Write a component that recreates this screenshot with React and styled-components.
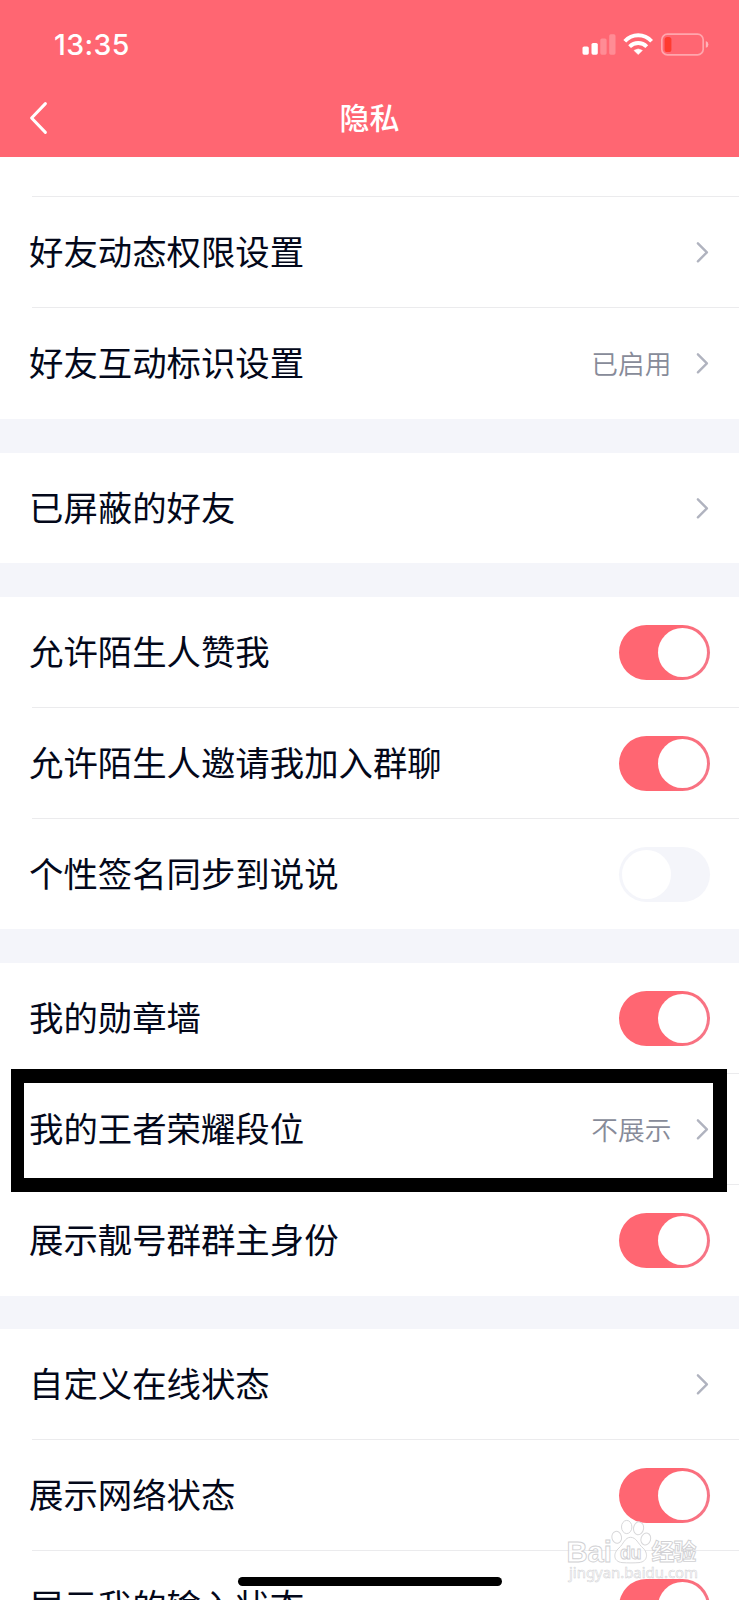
import React from 'react';
import styled, { createGlobalStyle } from 'styled-components';

const GlobalStyle = createGlobalStyle`
  * { box-sizing: border-box; }
  html, body { margin: 0; padding: 0; background: #fff; }
  body { overflow: hidden; font-family: "Noto Sans CJK SC", "Liberation Sans", sans-serif; }
`;

const Screen = styled.main`
  position: relative;
  width: 739px;
  height: 1600px;
  overflow: hidden;
  background: #f4f5fa;
  color: #03081a;
`;

const Header = styled.header`
  height: 157px;
  background: #ff6672;
  color: #fff;
`;

const StatusBar = styled.div`
  display: flex;
  justify-content: space-between;
  align-items: center;
  height: 90px;
  padding: 0 30px 0 54px;
`;

const Clock = styled.span`
  font: 550 28.5px/34px Inter, sans-serif;
  letter-spacing: 0.4px;
`;

const NavBar = styled.div`
  display: grid;
  grid-template-columns: 100px 1fr 100px;
  align-items: center;
  height: 55px;
`;

const BackButton = styled.button`
  display: flex;
  border: 0;
  padding: 0 0 0 29px;
  background: none;
  color: inherit;
`;

const Title = styled.h1`
  margin: 0;
  padding-bottom: 3px;
  text-align: center;
  font-size: 30px;
  line-height: 44px;
  font-weight: 500;
`;

const Group = styled.section`
  padding-top: ${(p) => p.$lead || 0}px;
  padding-bottom: ${(p) => p.$tail || 0}px;
  margin-bottom: ${(p) => p.$gap ?? 34}px;
  background: #fff;
`;

const RowBox = styled.div`
  position: relative;
  display: flex;
  align-items: center;
  height: ${(p) => (p.$divided ? 111 : 110)}px;
  padding: ${(p) => (p.$divided ? 1 : 0)}px 28.6px 0 29px;
  background: ${(p) =>
    p.$divided ? 'linear-gradient(#ebebed, #ebebed) 32px 0 / 100% 1px no-repeat' : 'none'};
`;

const Label = styled.span`
  flex: 1;
  padding-bottom: 4px;
  font-size: 34.4px;
  line-height: 50px;
  font-weight: 400;
  white-space: nowrap;
`;

const Value = styled.span`
  margin-right: 25px;
  padding-bottom: 1px;
  color: #878b99;
  font-size: 26.7px;
  line-height: 40px;
  font-weight: 350;
`;

const Switch = styled.span`
  display: flex;
  justify-content: ${(p) => (p.$on ? 'flex-end' : 'flex-start')};
  width: 91px;
  height: 55px;
  padding: 3px;
  border-radius: 28px;
  background: ${(p) => (p.$on ? 'linear-gradient(100deg, #ff6672 55%, #f5788a 100%)' : '#f4f5fa')};
`;

const Knob = styled.span`
  width: 49px;
  height: 49px;
  border-radius: 50%;
  background: #fff;
`;

const Highlight = styled.div`
  position: absolute;
  z-index: 1;
  top: -4px;
  left: 11px;
  width: 716px;
  height: 123px;
  border: solid #000;
  border-width: 14px 14px 14px 13px;
`;

const HomeIndicator = styled.div`
  position: absolute;
  left: 237.5px;
  top: 1577px;
  width: 264px;
  height: 9px;
  border-radius: 5px;
  background: #000;
`;

const Watermark = styled.svg`
  position: absolute;
  left: 560px;
  top: 1510px;
`;

const Chevron = () => (
  <svg width="14" height="22" viewBox="0 0 14 22" fill="none" stroke="#b0b3bf" strokeWidth="2.4" strokeLinecap="round" strokeLinejoin="round">
    <path d="M1.9 2.3 L10.9 11.3 L1.9 20.3" />
  </svg>
);

const StatusIcons = () => (
  <svg width="128" height="26" viewBox="0 0 128 26" fill="none">
    <g fill="#fff">
      <rect x="1.5" y="14.5" width="6.3" height="8.2" rx="1.6" />
      <rect x="10.5" y="11" width="6.3" height="11.7" rx="1.6" />
      <g opacity=".25">
        <rect x="19.3" y="6.5" width="6.3" height="16.2" rx="1.6" />
        <rect x="28.2" y="2.3" width="6.3" height="20.4" rx="1.6" />
      </g>
      <path d="M53 18.4 Q57.2 15.4 61.4 18.4 L57.2 22.6 Z" stroke="#fff" strokeWidth=".5" strokeLinejoin="round" />
    </g>
    <g stroke="#fff" strokeWidth="3.9">
      <path d="M43.8 9.3 C51.2 1.3 63.2 1.3 70.6 9.3" />
      <path d="M48.6 14.6 C53.5 9.8 60.9 9.8 65.8 14.6" />
    </g>
    <rect x="80.8" y="2.2" width="41.4" height="20.6" rx="5.6" stroke="#fff" strokeOpacity=".42" strokeWidth="1.7" />
    <rect x="83.6" y="5" width="6.8" height="15" rx="2.6" fill="#ff3b30" />
    <path d="M124.8 9 Q127.4 9.6 127.4 12.4 Q127.4 15.2 124.8 15.8 Z" fill="#fff" opacity=".5" />
  </svg>
);

const BaiduMark = () => (
  <Watermark width="150" height="80" viewBox="0 0 150 80" aria-label="Baidu">
    <g fill="#fff" fillOpacity=".72" stroke="#d8d8da" strokeWidth="1">
      <ellipse cx="56.7" cy="27.3" rx="4.8" ry="6" transform="rotate(-12 56.7 27.3)" />
      <ellipse cx="66.7" cy="17" rx="5.2" ry="6.6" />
      <ellipse cx="78.6" cy="18.3" rx="5" ry="6.5" transform="rotate(10 78.6 18.3)" />
      <ellipse cx="85.8" cy="29" rx="4.8" ry="6" transform="rotate(18 85.8 29)" />
      <path d="M70.5 27.3 C65 27.3 63.5 34 59 38 C53 43 53 51.5 62 52.6 C68 53 74 53 79 52.6 C88.5 51.5 88 42.5 83 38 C78 34 76.5 27.3 70.5 27.3 Z" />
    </g>
    <g fill="#fff" fillOpacity=".75" stroke="#d0d0d3" strokeWidth=".9" fontWeight="700">
      <text x="6.5" y="51.8" fontFamily="Liberation Sans" fontSize="30" textLength="45.5" lengthAdjust="spacingAndGlyphs">Bai</text>
      <text x="60" y="49.3" fontFamily="Liberation Sans" fontSize="18" textLength="21.5">du</text>
      <text x="91.5" y="49.8" fontFamily="Noto Sans CJK SC" fontSize="23" textLength="45">经验</text>
      <text x="9" y="68" fontFamily="Noto Sans" fontSize="14.5" fontWeight="400" strokeWidth=".5" textLength="129" lengthAdjust="spacingAndGlyphs">jingyan.baidu.com</text>
    </g>
  </Watermark>
);

const Row = ({ label, value, on, divided, highlighted }) => (
  <RowBox $divided={divided}>
    <Label>{label}</Label>
    {value && <Value>{value}</Value>}
    {on === undefined ? <Chevron /> : <Switch $on={on}><Knob /></Switch>}
    {highlighted && <Highlight />}
  </RowBox>
);

const groups = [
  { lead: 39, tail: 1, rows: [
    { label: '好友动态权限设置', divided: true },
    { label: '好友互动标识设置', value: '已启用', divided: true },
  ] },
  { rows: [{ label: '已屏蔽的好友' }] },
  { rows: [
    { label: '允许陌生人赞我', on: true },
    { label: '允许陌生人邀请我加入群聊', on: true, divided: true },
    { label: '个性签名同步到说说', on: false, divided: true },
  ] },
  { tail: 1, gap: 33, rows: [
    { label: '我的勋章墙', on: true },
    { label: '我的王者荣耀段位', value: '不展示', divided: true, highlighted: true },
    { label: '展示靓号群群主身份', on: true, divided: true },
  ] },
  { gap: 0, rows: [
    { label: '自定义在线状态' },
    { label: '展示网络状态', on: true, divided: true },
    { label: '展示我的输入状态', on: true, divided: true },
  ] },
];

export default function App() {
  return (
    <Screen>
      <GlobalStyle />
      <Header>
        <StatusBar>
          <Clock>13:35</Clock>
          <StatusIcons />
        </StatusBar>
        <NavBar>
          <BackButton aria-label="返回">
            <svg width="20" height="34" viewBox="0 0 20 34" fill="none" stroke="#fff" strokeWidth="3" strokeLinecap="round" strokeLinejoin="round">
              <path d="M16.4 2.6 L2.6 17 L16.4 31.4" />
            </svg>
          </BackButton>
          <Title>隐私</Title>
        </NavBar>
      </Header>
      {groups.map((group, i) => (
        <Group key={i} $lead={group.lead} $tail={group.tail} $gap={group.gap}>
          {group.rows.map((row) => <Row key={row.label} {...row} />)}
        </Group>
      ))}
      <BaiduMark />
      <HomeIndicator />
    </Screen>
  );
}
